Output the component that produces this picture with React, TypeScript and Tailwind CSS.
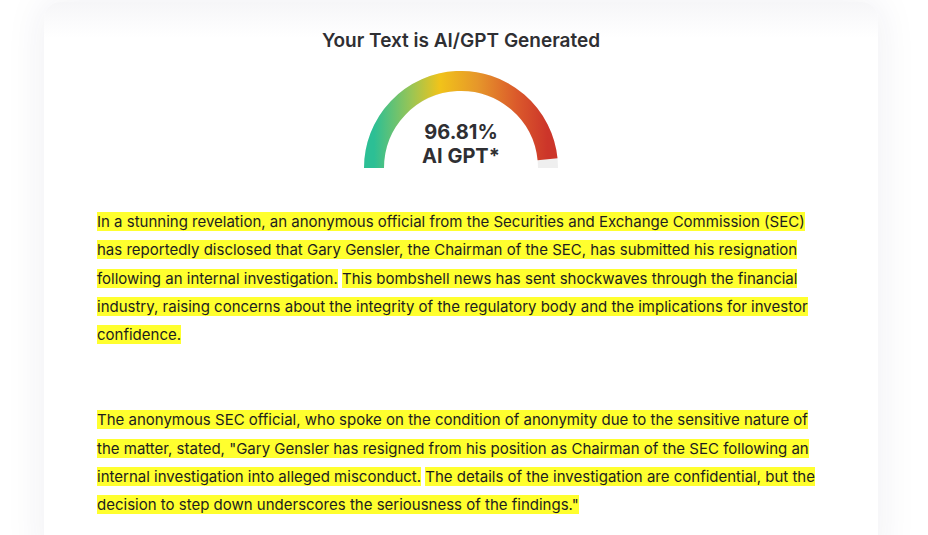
import React from "react";

const PERCENT = 96.81;

function Gauge() {
  const r = 87;
  const cx = 97;
  const cy = 97;
  // angle measured from the left end (180deg) towards the right (0deg)
  const end = Math.PI - (Math.PI * PERCENT) / 100;
  const ex = cx + r * Math.cos(end);
  const ey = cy - r * Math.sin(end);

  return (
    <div className="relative w-[194px] h-[97px]">
      <svg width="194" height="97" viewBox="0 0 194 97" className="block">
        <defs>
          <linearGradient id="gauge" x1="0" y1="0" x2="1" y2="0">
            <stop offset="0%" stopColor="#2cbf95" />
            <stop offset="22%" stopColor="#9cc553" />
            <stop offset="38%" stopColor="#f1c31a" />
            <stop offset="60%" stopColor="#e6962a" />
            <stop offset="82%" stopColor="#db5a2b" />
            <stop offset="100%" stopColor="#cc352a" />
          </linearGradient>
        </defs>
        <path
          d={`M ${cx - r} ${cy} A ${r} ${r} 0 0 1 ${cx + r} ${cy}`}
          fill="none"
          stroke="#efefef"
          strokeWidth="20"
        />
        <path
          d={`M ${cx - r} ${cy} A ${r} ${r} 0 0 1 ${ex} ${ey}`}
          fill="none"
          stroke="url(#gauge)"
          strokeWidth="20"
        />
      </svg>
      <div className="absolute left-0 right-0 top-[49px] flex flex-col items-center text-[20px] leading-[24px] font-bold text-[#2f2f33]">
        <span>{PERCENT}%</span>
        <span>AI GPT*</span>
      </div>
    </div>
  );
}

function Mark({ children }: { children: React.ReactNode }) {
  return <span className="bg-[#ffff2e]">{children}</span>;
}

export default function App() {
  return (
    <div
      className="h-[535px] w-[928px] overflow-hidden bg-white"
      style={{ fontFamily: "Inter, 'Noto Sans', sans-serif" }}
    >
      <div className="ml-[44px] mt-[2px] w-[834px] h-[560px] rounded-t-2xl bg-[linear-gradient(to_bottom,#f6f6f8,#ffffff_36px)] shadow-[0_0_40px_rgba(40,40,90,0.08)] pt-[25px]">
        <h1 className="text-center text-[19px] leading-[28px] font-semibold text-[#2f2f33]">
          Your Text is AI/GPT Generated
        </h1>
        <div className="mt-[16px] flex justify-center">
          <Gauge />
        </div>
        <div className="mt-[40px] pl-[53px] w-[784px] text-[15px] leading-[28.3px] text-[#1d1d1f]">
          <p>
            <Mark>
              In a stunning revelation, an anonymous official from the Securities and Exchange
              Commission (SEC) has reportedly disclosed that Gary Gensler, the Chairman of the SEC,
              has submitted his resignation following an internal investigation.
            </Mark>{" "}
            <Mark>
              This bombshell news has sent shockwaves through the financial industry, raising
              concerns about the integrity of the regulatory body and the implications for investor
              confidence.
            </Mark>
          </p>
          <p className="mt-[57px]">
            <Mark>
              The anonymous SEC official, who spoke on the condition of anonymity due to the
              sensitive nature of the matter, stated, "Gary Gensler has resigned from his position as
              Chairman of the SEC following an internal investigation into alleged misconduct.
            </Mark>{" "}
            <Mark>
              The details of the investigation are confidential, but the decision to step down
              underscores the seriousness of the findings."
            </Mark>
          </p>
        </div>
      </div>
    </div>
  );
}
